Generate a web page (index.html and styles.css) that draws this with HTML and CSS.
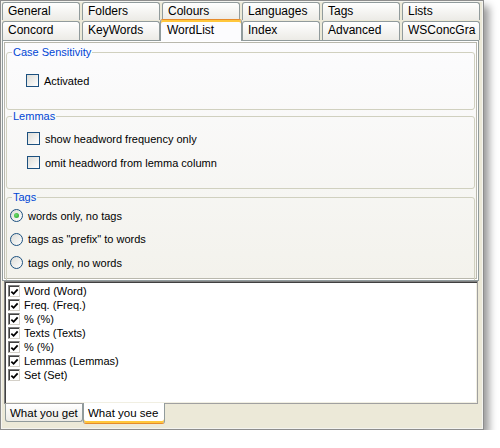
FILE: index.html
```html
<!DOCTYPE html>
<html>
<head>
<meta charset="utf-8">
<link rel="stylesheet" href="styles.css">
</head>
<body>
<div class="window">
  <div class="tabs">
    <div class="tab">General</div>
    <div class="tab">Folders</div>
    <div class="tab">Colours</div>
    <div class="tab">Languages</div>
    <div class="tab">Tags</div>
    <div class="tab">Lists</div>
    <div class="tab">Concord</div>
    <div class="tab">KeyWords</div>
    <div class="tab sel">WordList</div>
    <div class="tab">Index</div>
    <div class="tab">Advanced</div>
    <div class="tab">WSConcGra</div>
  </div>
  <div class="page">
    <fieldset class="grp g1">
      <legend>Case Sensitivity</legend>
      <div class="opts opts1">
        <label class="opt"><span class="cb"></span>Activated</label>
      </div>
    </fieldset>
    <fieldset class="grp g2">
      <legend>Lemmas</legend>
      <div class="opts opts2">
        <label class="opt"><span class="cb"></span>show headword frequency only</label>
        <label class="opt"><span class="cb"></span>omit headword from lemma column</label>
      </div>
    </fieldset>
    <fieldset class="grp g3">
      <legend>Tags</legend>
      <div class="opts opts3">
        <label class="opt"><span class="rb on"></span>words only, no tags</label>
        <label class="opt"><span class="rb"></span>tags as "prefix" to words</label>
        <label class="opt"><span class="rb"></span>tags only, no words</label>
      </div>
    </fieldset>
  </div>
  <div class="list">
    <div class="item"><span class="lcb"><svg viewBox="0 0 10 10" width="10" height="10"><polyline points="1.5,4.5 4,7 8.5,2" fill="none" stroke="#000" stroke-width="2"/></svg></span>Word (Word)</div>
    <div class="item"><span class="lcb"><svg viewBox="0 0 10 10" width="10" height="10"><polyline points="1.5,4.5 4,7 8.5,2" fill="none" stroke="#000" stroke-width="2"/></svg></span>Freq. (Freq.)</div>
    <div class="item"><span class="lcb"><svg viewBox="0 0 10 10" width="10" height="10"><polyline points="1.5,4.5 4,7 8.5,2" fill="none" stroke="#000" stroke-width="2"/></svg></span>% (%)</div>
    <div class="item"><span class="lcb"><svg viewBox="0 0 10 10" width="10" height="10"><polyline points="1.5,4.5 4,7 8.5,2" fill="none" stroke="#000" stroke-width="2"/></svg></span>Texts (Texts)</div>
    <div class="item"><span class="lcb"><svg viewBox="0 0 10 10" width="10" height="10"><polyline points="1.5,4.5 4,7 8.5,2" fill="none" stroke="#000" stroke-width="2"/></svg></span>% (%)</div>
    <div class="item"><span class="lcb"><svg viewBox="0 0 10 10" width="10" height="10"><polyline points="1.5,4.5 4,7 8.5,2" fill="none" stroke="#000" stroke-width="2"/></svg></span>Lemmas (Lemmas)</div>
    <div class="item"><span class="lcb"><svg viewBox="0 0 10 10" width="10" height="10"><polyline points="1.5,4.5 4,7 8.5,2" fill="none" stroke="#000" stroke-width="2"/></svg></span>Set (Set)</div>
  </div>
  <div class="btabs">
    <div class="btab">What you get</div>
    <div class="btab sel">What you see</div>
  </div>
</div>
</body>
</html>
```
FILE: styles.css
```css
html, body {
  margin: 0;
  padding: 0;
  background: #ffffff;
}
body {
  font-family: "Liberation Sans", Arial, sans-serif;
  font-size: 11px;
  color: #000;
}
.window {
  box-sizing: border-box;
  width: 484px;
  height: 430px;
  border: 1px solid #8d8d8d;
  background: #ece9d8;
  box-shadow: inset 0 0 0 1px #f4f4f0, 5px 6px 8px rgba(0, 0, 0, 0.4);
  display: flex;
  flex-direction: column;
}
.tabs {
  margin: 1px 0 0 1px;
  display: grid;
  grid-template-columns: repeat(6, 78px);
  grid-template-rows: 18px 19px;
  column-gap: 2px;
  row-gap: 1px;
}
.tab {
  box-sizing: border-box;
  border: 1px solid #919b9c;
  border-bottom: none;
  border-radius: 3px 3px 0 0;
  background: linear-gradient(#ffffff, #ecebe6);
  font-size: 12px;
  line-height: 15px;
  padding: 1px 0 0 5px;
  white-space: nowrap;
  overflow: hidden;
}
.tab.sel {
  margin: -2px -2px -1px -2px;
  z-index: 2;
  background: #fcfcfe;
  border-top: 1px solid #e68b2c;
  box-shadow: inset 0 2px 0 #ffc73c;
  padding: 3px 0 0 6px;
}
.page {
  box-sizing: border-box;
  margin-left: 1px;
  width: 477px;
  height: 241px;
  border: 1px solid #919b9c;
  background: linear-gradient(#fcfcfe, #f3f2ec);
  box-shadow: inset 0 0 0 1px #ffffff, inset 0 0 0 2px #b9b8ad;
  padding: 0 3px;
  overflow: hidden;
}
.grp {
  box-sizing: border-box;
  margin: 0;
  padding: 0;
  min-width: 0;
  border: 1px solid #d0d0bf;
  border-radius: 3px;
}
.grp legend {
  margin-left: 5px;
  padding: 0 1px;
  color: #0046d5;
  font-size: 11px;
  line-height: 13px;
}
.g1 {
  margin-top: 5px;
  height: 64px;
}
.g2 {
  height: 79px;
}
.g3 {
  margin-top: 2px;
  height: 92px;
}
.opts {
  display: flex;
  flex-direction: column;
}
.opts1 {
  padding: 15px 0 0 19px;
}
.opts2 {
  padding: 9px 0 0 20px;
  gap: 11px;
}
.opts3 {
  padding: 5px 0 0 3px;
  gap: 10.5px;
}
.opt {
  display: flex;
  align-items: center;
  gap: 5px;
  height: 13px;
  white-space: nowrap;
}
.cb {
  box-sizing: border-box;
  width: 13px;
  height: 13px;
  border: 1px solid #1c5180;
  background: linear-gradient(135deg, #dcdcd7, #ffffff);
  flex: none;
}
.rb {
  box-sizing: border-box;
  width: 13px;
  height: 13px;
  border: 1px solid #1c5180;
  border-radius: 50%;
  background: linear-gradient(135deg, #dcdcd7, #ffffff);
  flex: none;
  display: flex;
  align-items: center;
  justify-content: center;
}
.rb.on::after {
  content: "";
  width: 5px;
  height: 5px;
  border-radius: 50%;
  background: radial-gradient(circle at 40% 40%, #6fdc6f, #21a121);
}
.list {
  box-sizing: border-box;
  margin-left: 3px;
  width: 474px;
  height: 123px;
  background: #ffffff;
  border: 1px solid;
  border-color: #808080 #a0a0a0 #a0a0a0 #808080;
  box-shadow: inset 1px 1px 0 #404040, inset -1px -1px 0 #f1efe2;
  padding: 2px 0 0 3px;
}
.item {
  display: flex;
  align-items: center;
  gap: 4px;
  height: 14px;
  white-space: nowrap;
}
.lcb {
  box-sizing: border-box;
  width: 12px;
  height: 12px;
  border: 1px solid;
  border-color: #808080 #d4d0c8 #d4d0c8 #808080;
  box-shadow: inset 1px 1px 0 #404040;
  background: #ffffff;
  display: flex;
  align-items: center;
  justify-content: center;
  flex: none;
}
.lcb svg {
  display: block;
  margin: 1px 0 0 1px;
}
.btabs {
  display: flex;
  align-items: flex-start;
  padding-left: 4px;
}
.btab {
  box-sizing: border-box;
  width: 78px;
  height: 18px;
  border: 1px solid #919b9c;
  border-top: none;
  border-radius: 0 0 3px 3px;
  background: linear-gradient(#ffffff, #ecebe6);
  font-size: 11.5px;
  line-height: 14px;
  padding: 2px 0 0 4px;
  white-space: nowrap;
}
.btab.sel {
  width: 82px;
  height: 21px;
  margin-top: -1px;
  background: #ffffff;
  border-bottom: 1px solid #e68b2c;
  box-shadow: inset 0 -2px 0 #ffc73c;
  padding: 3px 0 0 4px;
}
```
